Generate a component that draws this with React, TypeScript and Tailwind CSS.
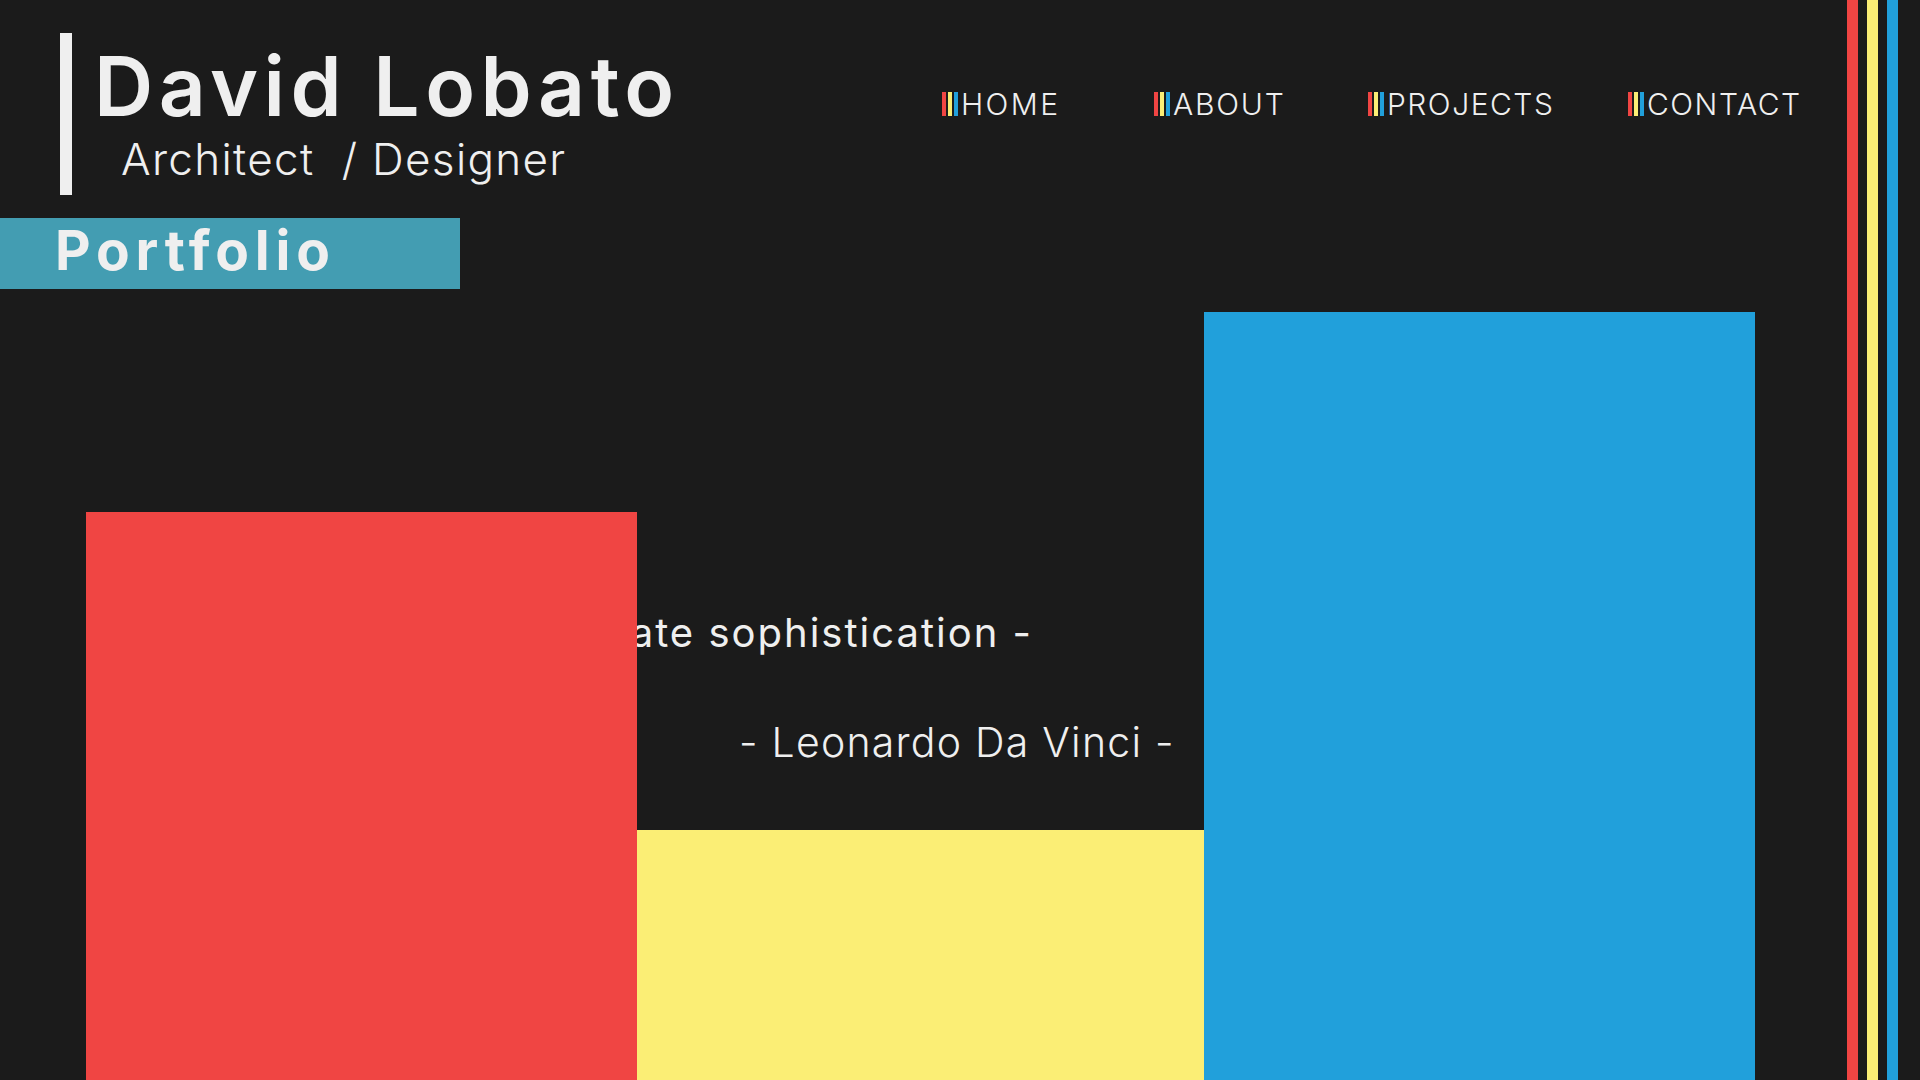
const navItems = [
  { label: "HOME", width: "w-[212px]", track: "tracking-[0.08em]" },
  { label: "ABOUT", width: "w-[214px]", track: "tracking-[0.06em]" },
  { label: "PROJECTS", width: "w-[260px]", track: "tracking-[0.05em]" },
  { label: "CONTACT", width: "", track: "tracking-[0.05em]" },
];

function Bars() {
  return (
    <span className="flex h-[24px] gap-[2px] mr-[3px]">
      <span className="w-[4px] h-full bg-[#f04543]" />
      <span className="w-[4px] h-full bg-[#fbee75]" />
      <span className="w-[4px] h-full bg-[#21a0db]" />
    </span>
  );
}

export default function App() {
  return (
    <div
      className="flex h-[1080px] w-[1920px] overflow-hidden bg-[#1b1b1b] text-[#efefef]"
      style={{ fontFamily: "Inter, 'Noto Sans', sans-serif" }}
    >
      <div className="flex flex-1 flex-col">
        {/* header */}
        <header className="flex items-start pt-[33px]">
          <div className="flex w-[942px] pl-[60px]">
            <div className="w-[12px] h-[162px] bg-[#efefef]" />
            <div className="mt-[13px] ml-[22px] flex flex-col">
              <h1 className="text-[82px] leading-none font-semibold tracking-[0.067em]">David Lobato</h1>
              <p className="mt-[9px] ml-[27px] whitespace-pre text-[44px] leading-none font-light tracking-[0.03em]">
                Architect  / Designer
              </p>
            </div>
          </div>
          <nav className="mt-[56px] flex items-start">
            {navItems.map((item) => (
              <a key={item.label} href="#" className={`flex items-center ${item.width}`}>
                <Bars />
                <span className={`text-[30px] leading-none font-light ${item.track}`}>{item.label}</span>
              </a>
            ))}
          </nav>
        </header>

        <div className="mt-[23px] flex h-[71px] w-[460px] bg-[#439db2] pl-[55px] pt-[5px]">
          <span className="text-[55px] leading-none font-bold tracking-[0.105em]">Portfolio</span>
        </div>

        {/* main */}
        <main className="relative flex flex-1 items-end pl-[86px]">
          <div className="absolute left-0 top-[324px] w-[1033px] text-right text-[40px] leading-none tracking-[0.05em]">
            - Simplicity is the ultimate sophistication -
          </div>
          <div className="absolute left-[739px] top-[433px] text-[41px] leading-none font-light tracking-[0.03em]">
            - Leonardo Da Vinci -
          </div>
          <div className="relative w-[551px] h-[568px] bg-[#f04543]" />
          <div className="relative w-[567px] h-[250px] bg-[#fbee75]" />
          <div className="relative w-[551px] h-[768px] bg-[#21a0db]" />
        </main>
      </div>

      {/* right stripes */}
      <div className="flex gap-[9px] pr-[22px]">
        <div className="w-[11px] h-full bg-[#f04543]" />
        <div className="w-[11px] h-full bg-[#fbee75]" />
        <div className="w-[11px] h-full bg-[#21a0db]" />
      </div>
    </div>
  );
}
